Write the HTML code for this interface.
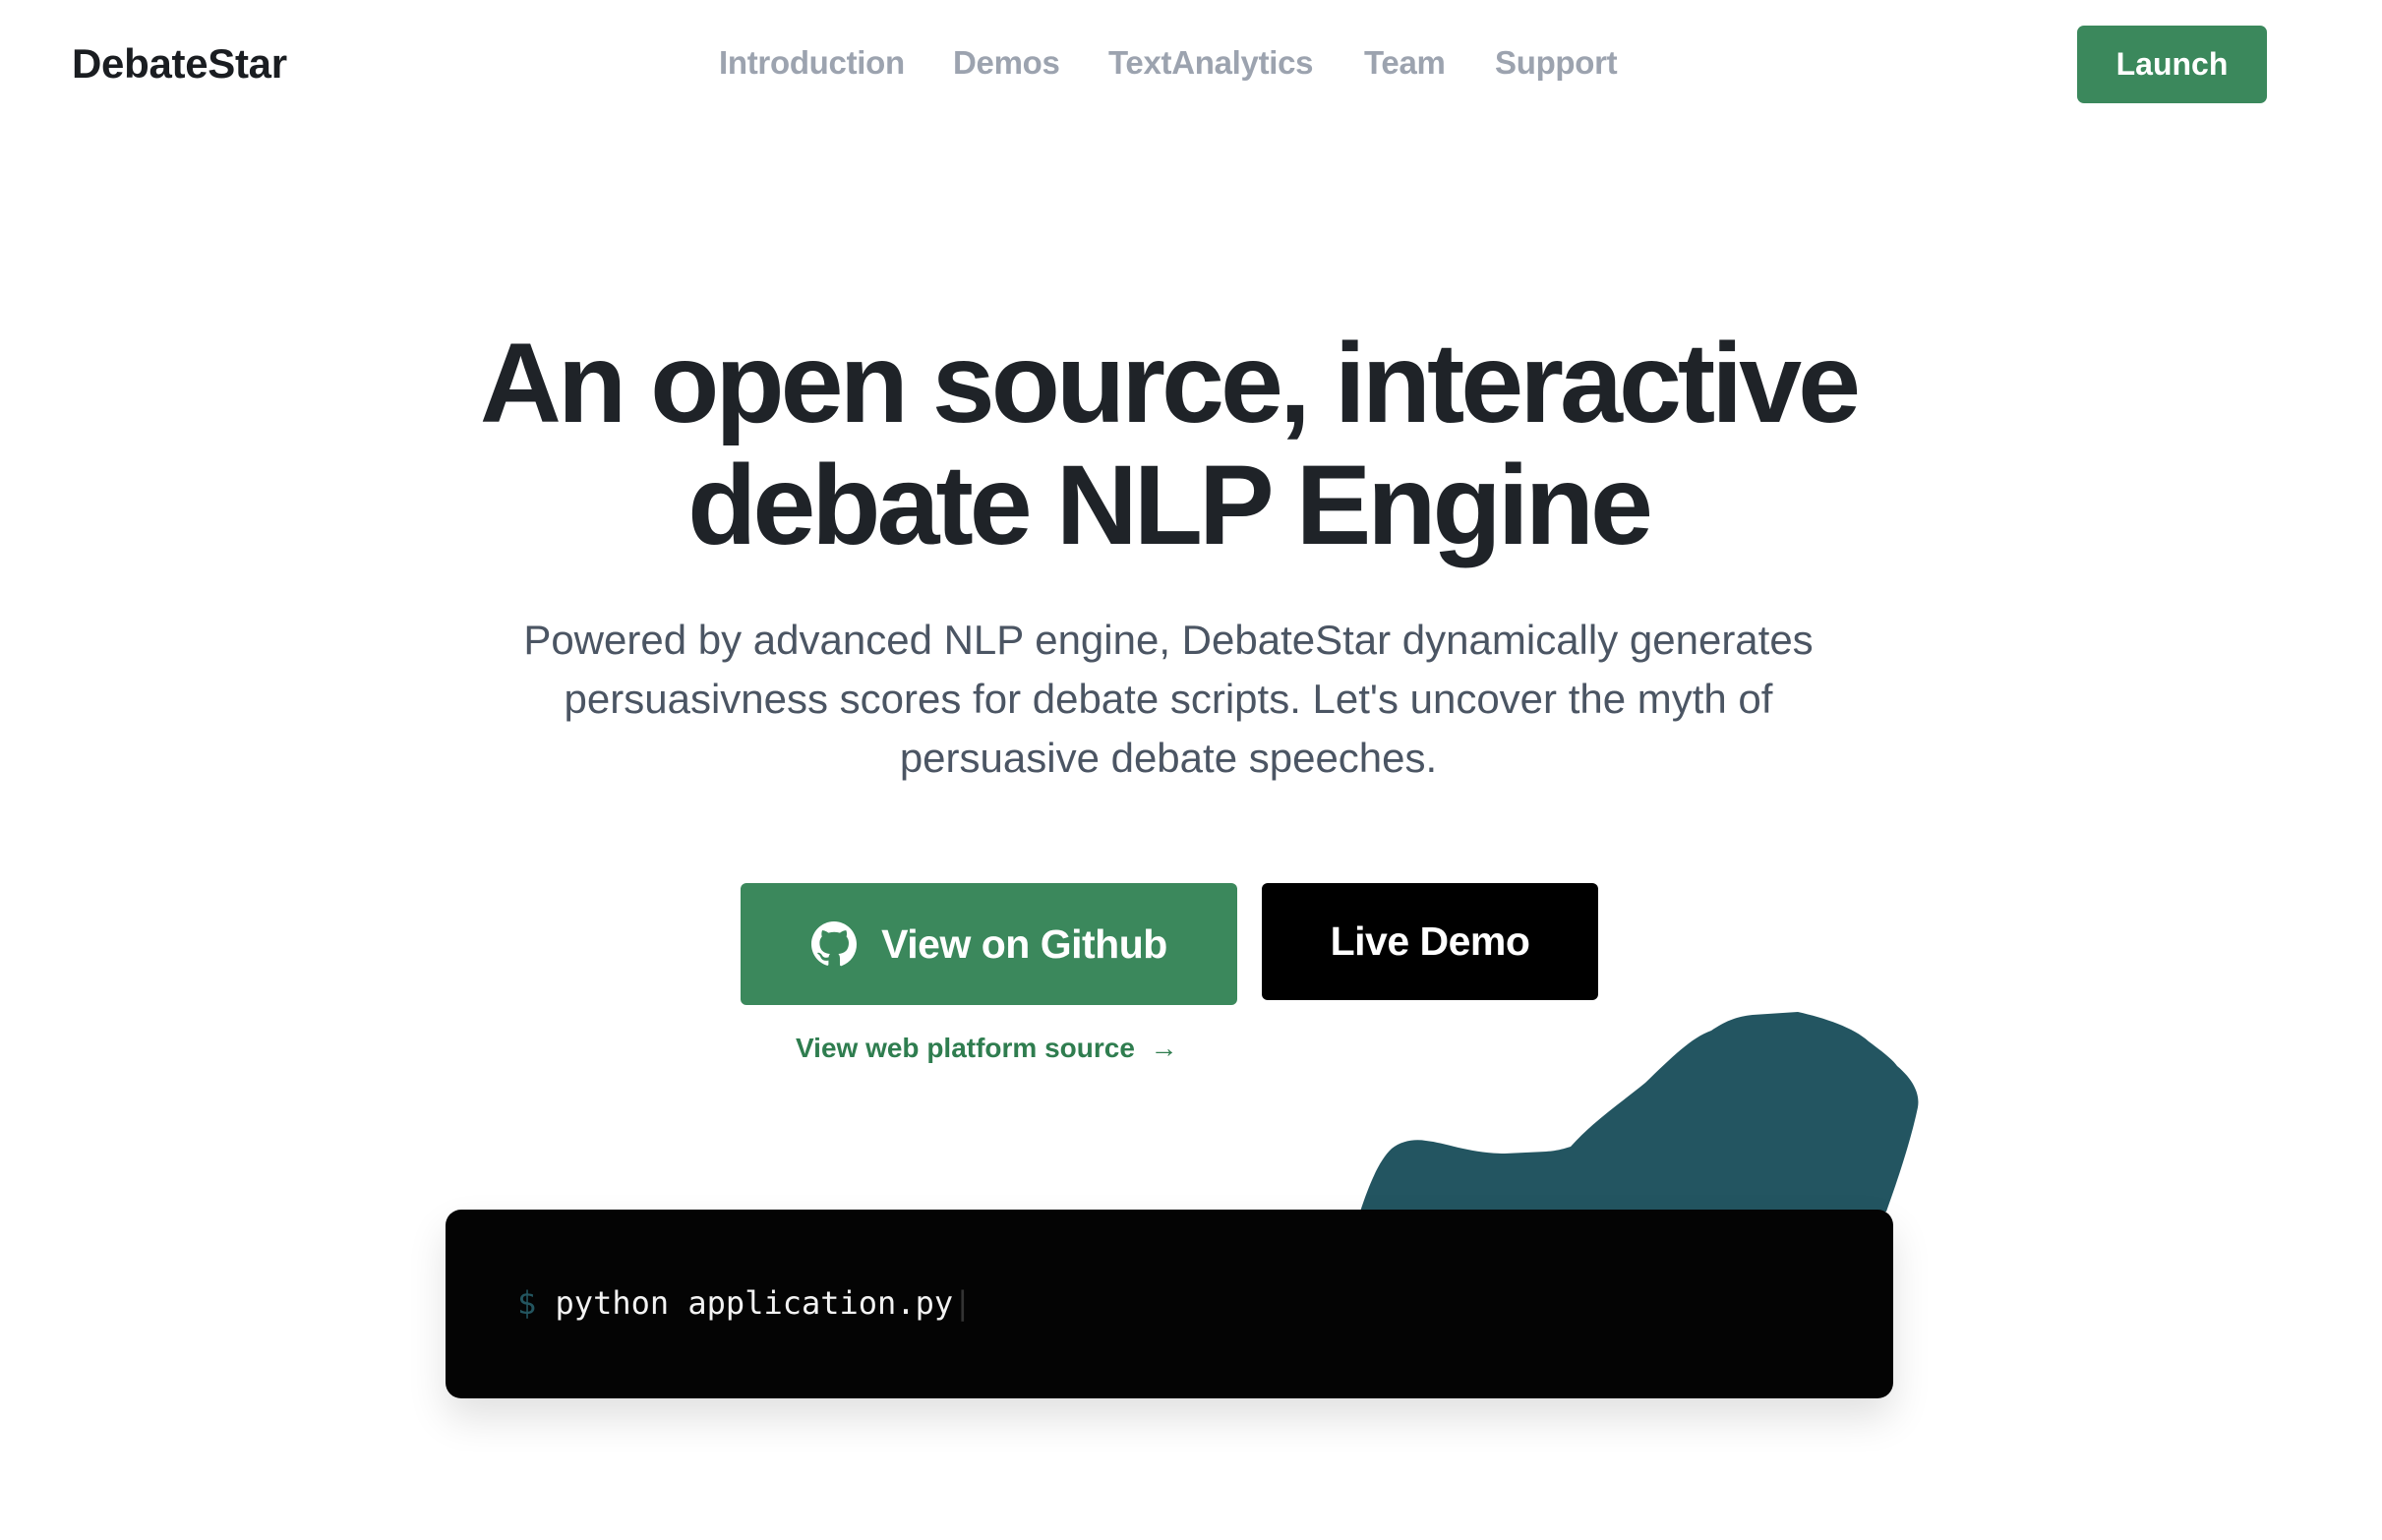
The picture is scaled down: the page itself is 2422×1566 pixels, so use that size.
<!DOCTYPE html>
<html><head><meta charset="utf-8"><style>
*{margin:0;padding:0;box-sizing:border-box}
html,body{width:2422px;height:1566px;overflow:hidden}
body{background:#fff;font-family:"Liberation Sans",sans-serif;position:relative;color:#1f2328}
.abs{position:absolute}
.logo{left:73px;top:41px;font-size:42px;font-weight:700;letter-spacing:-0.3px;color:#1a1d21}
.nav a{position:absolute;top:45px;font-size:33px;color:#9ca3af;text-decoration:none;font-weight:600;white-space:nowrap;letter-spacing:-0.3px}
.launch{left:2112px;top:26px;width:193px;height:79px;background:#3b885c;border-radius:7px;color:#fff;font-size:32px;font-weight:600;display:flex;align-items:center;justify-content:center}
h1{position:absolute;left:0;width:2376px;top:328px;text-align:center;font-size:115px;letter-spacing:-4px;line-height:124px;font-weight:700;color:#1f2328}
p.sub{position:absolute;left:0;width:2376px;top:621px;text-align:center;font-size:42px;line-height:60px;color:#4b5563}
.gh{left:753px;top:898px;width:505px;height:124px;background:#3b885c;border-radius:6px;color:#fff;font-size:41px;font-weight:600;display:flex;align-items:center;justify-content:center;gap:24px;letter-spacing:-0.5px}
.ld{left:1283px;top:898px;width:342px;height:119px;background:#000;border-radius:6px;color:#fff;font-size:41px;font-weight:600;display:flex;align-items:center;justify-content:center;letter-spacing:-0.5px}
.link{left:809px;top:1050px;font-size:28px;font-weight:700;color:#2f7d4f;white-space:nowrap}
.term{left:453px;top:1230px;width:1472px;height:192px;background:#040404;border-radius:16px;box-shadow:0 20px 40px rgba(0,0,0,0.12)}
.cmd{left:526px;top:1306px;font-family:"DejaVu Sans Mono","Liberation Mono",monospace;font-size:32px;color:#f3f3f3;white-space:pre}
.cmd span{color:#23555f}
</style></head><body>
<div class="abs logo">DebateStar</div>
<div class="nav">
<a style="left:731px">Introduction</a>
<a style="left:969px">Demos</a>
<a style="left:1127px">TextAnalytics</a>
<a style="left:1387px">Team</a>
<a style="left:1520px">Support</a>
</div>
<div class="abs launch">Launch</div>
<h1>An open source, interactive<br>debate NLP Engine</h1>
<p class="sub">Powered by advanced NLP engine, DebateStar dynamically generates<br>persuasivness scores for debate scripts. Let's uncover the myth of<br>persuasive debate speeches.</p>
<div class="abs gh"><svg width="48" height="48" viewBox="0 0 24 24"><path fill="#fff" d="M12 .5C5.7.5.5 5.7.5 12c0 5.1 3.3 9.4 7.9 10.9.6.1.8-.3.8-.6v-2c-3.2.7-3.9-1.5-3.9-1.5-.5-1.3-1.3-1.7-1.3-1.7-1-.7.1-.7.1-.7 1.2.1 1.8 1.2 1.8 1.2 1 1.8 2.7 1.3 3.4 1 .1-.8.4-1.3.7-1.6-2.6-.3-5.3-1.3-5.3-5.7 0-1.3.5-2.3 1.2-3.1-.1-.3-.5-1.5.1-3.1 0 0 1-.3 3.2 1.2a11 11 0 0 1 5.8 0c2.2-1.5 3.2-1.2 3.2-1.2.6 1.6.2 2.8.1 3.1.7.8 1.2 1.9 1.2 3.1 0 4.4-2.7 5.4-5.3 5.7.4.4.8 1.1.8 2.2v3.3c0 .3.2.7.8.6A11.5 11.5 0 0 0 23.5 12C23.5 5.7 18.3.5 12 .5z"/></svg>View on Github</div>
<div class="abs ld">Live Demo</div>
<div class="abs link">View web platform source &nbsp;→</div>
<svg class="abs" style="left:-10px;top:0" width="2422" height="1566"><path fill="#235561" d="M1393,1232 C1402,1205 1412,1180 1425,1168 C1435,1160 1448,1158 1460,1160 C1480,1162 1505,1173 1540,1173 L1582,1171 C1595,1170 1600,1168 1607,1166 C1630,1140 1660,1120 1683,1101 C1710,1075 1730,1055 1750,1048 C1765,1038 1775,1034 1792,1032 L1838,1029 C1865,1035 1895,1045 1910,1059 C1925,1070 1935,1078 1939,1084 C1958,1100 1962,1115 1960,1126 C1955,1150 1945,1185 1928,1232 Z"/></svg>
<div class="abs term"></div>
<div class="abs cmd"><span>$</span> python application.py<span style="color:#333">|</span></div>
</body></html>
